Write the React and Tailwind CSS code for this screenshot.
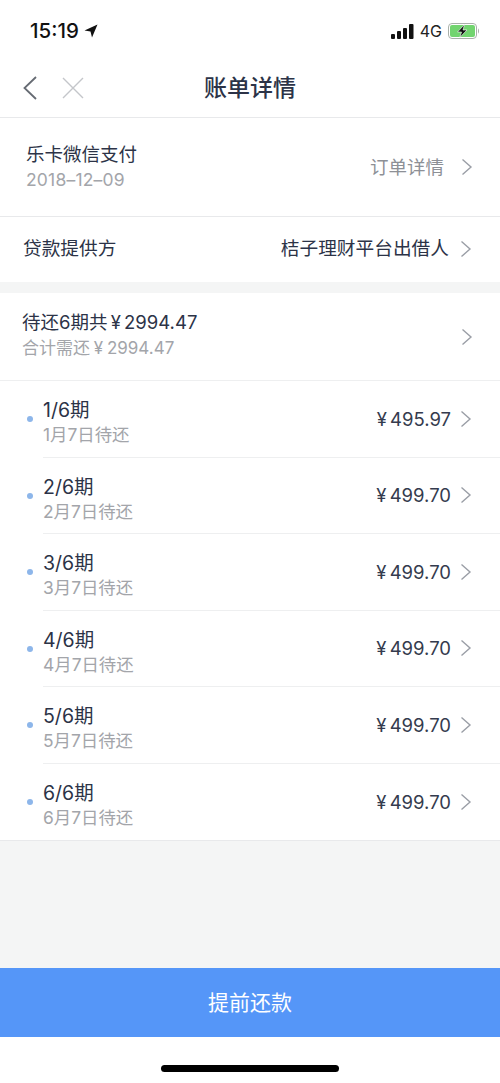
const plans = [
  { no: '1/6期', date: '1月7日待还', amount: '¥ 495.97' },
  { no: '2/6期', date: '2月7日待还', amount: '¥ 499.70' },
  { no: '3/6期', date: '3月7日待还', amount: '¥ 499.70' },
  { no: '4/6期', date: '4月7日待还', amount: '¥ 499.70' },
  { no: '5/6期', date: '5月7日待还', amount: '¥ 499.70' },
  { no: '6/6期', date: '6月7日待还', amount: '¥ 499.70' },
]

function Chevron({ className = '' }) {
  return (
    <svg width="12" height="18" viewBox="0 0 12 18" fill="none" className={className} aria-hidden="true">
      <path d="M1.5 1.5L10 9L1.5 16.5" stroke="#9a9ea6" strokeWidth="1.4" />
    </svg>
  )
}

function StatusBar() {
  return (
    <div className="flex h-[60px] items-start justify-between pl-[30px] pr-[20px] pt-[19px]">
      <div className="flex items-center gap-[5px]">
        <span className="text-[20.5px] leading-[24px] font-medium text-[#111]">15:19</span>
        <svg width="14" height="14" viewBox="0 0 14 14" aria-hidden="true">
          <path d="M13.5 0.5L0.5 6.5L6.5 7.5L8 13.5Z" fill="#111" />
        </svg>
      </div>
      <div className="flex items-center gap-[6px] pt-[3px]">
        <svg width="23" height="15" viewBox="0 0 23 15" aria-hidden="true">
          <rect x="0" y="10" width="4" height="5" rx="1" fill="#111" />
          <rect x="6" y="7" width="4" height="8" rx="1" fill="#111" />
          <rect x="12" y="4" width="4" height="11" rx="1" fill="#111" />
          <rect x="18" y="0" width="4.5" height="15" rx="1" fill="#111" />
        </svg>
        <span className="text-[16px] leading-[18px] text-[#222]">4G</span>
        <svg width="32" height="16" viewBox="0 0 32 16" aria-hidden="true">
          <rect x="0.5" y="0.5" width="28" height="15" rx="3.5" fill="none" stroke="#a9b0a9" />
          <rect x="2" y="2" width="25" height="12" rx="2" fill="#72d46f" />
          <path d="M30 5.5c1.3.4 1.3 4.6 0 5z" fill="#a9b0a9" />
          <path d="M16.5 1.5L9.5 9H13.5L11.8 14.5L19 7H15Z" fill="#111" stroke="#fff" strokeWidth="0.6" />
        </svg>
      </div>
    </div>
  )
}

function NavBar() {
  return (
    <div className="relative flex h-[58px] items-center border-b border-[#e8e9eb] pb-[1px] pl-[23px]">
      <svg width="14" height="24" viewBox="0 0 14 24" fill="none" aria-hidden="true">
        <path d="M13 1L1.5 12L13 23" stroke="#666b73" strokeWidth="1.8" />
      </svg>
      <svg width="22" height="22" viewBox="0 0 22 22" fill="none" className="ml-[25px]" aria-hidden="true">
        <path d="M1 1L21 21M21 1L1 21" stroke="#c4c6ca" strokeWidth="1.4" />
      </svg>
      <div className="absolute inset-x-0 text-center text-[23px] leading-[30px] font-medium text-[#2c3347]">账单详情</div>
    </div>
  )
}

function PlanRow({ plan, last }) {
  return (
    <div className="flex h-[76.5px] items-center pl-[27px]">
      <span className="mr-[10px] h-[6px] w-[6px] shrink-0 rounded-full bg-[#8db6ea]" />
      <div className={`flex h-full flex-1 justify-between pr-[22px] ${last ? '' : 'border-b border-[#eeeff0]'}`}>
        <div className="pt-[17px]">
          <div className="text-[19.5px] leading-[24px] text-[#2c3347]">{plan.no}</div>
          <div className="mt-[2px] text-[17.4px] leading-[22px] text-[#a3a5aa]">{plan.date}</div>
        </div>
        <div className="flex items-center gap-[9px] pr-[6px]">
          <span className="text-[18.5px] leading-[24px] text-[#343b4e] [word-spacing:-2px]">{plan.amount}</span>
          <Chevron />
        </div>
      </div>
    </div>
  )
}

export default function App() {
  return (
    <div className="flex h-[1083px] w-[500px] flex-col overflow-hidden bg-[#f4f5f5] font-['Inter','Noto_Sans_CJK_SC',sans-serif]">
      <div className="bg-white">
        <StatusBar />
        <NavBar />
      </div>

      <div className="flex h-[99px] items-center justify-between border-b border-[#e8e9eb] bg-white pl-[26px] pr-[27px]">
        <div className="-mt-[3px]">
          <div className="text-[18.5px] leading-[26px] text-[#2c3347]">乐卡微信支付</div>
          <div className="mt-[2px] text-[17.5px] leading-[22px] tracking-[0.2px] text-[#a3a5aa]">2018–12–09</div>
        </div>
        <div className="flex items-center gap-[17px]">
          <span className="text-[18.5px] leading-[26px] text-[#8d9096]">订单详情</span>
          <Chevron />
        </div>
      </div>

      <div className="flex h-[65px] items-center justify-between bg-white pb-[2px] pl-[23px] pr-[28px]">
        <span className="text-[18.7px] leading-[26px] text-[#2c3347]">贷款提供方</span>
        <div className="flex items-center gap-[11px]">
          <span className="text-[18.7px] leading-[26px] text-[#2c3347]">桔子理财平台出借人</span>
          <Chevron />
        </div>
      </div>

      <div className="mt-[11px] flex h-[88px] items-center justify-between border-b border-[#eeeff0] bg-white pl-[22px] pr-[27px]">
        <div className="-mt-[5px]">
          <div className="text-[18.5px] leading-[26px] text-[#2c3347] [word-spacing:-2px]">待还6期共 ¥ 2994.47</div>
          <div className="mt-[2px] text-[17px] leading-[22px] text-[#a3a5aa] [word-spacing:-1px]">合计需还 ¥ 2994.47</div>
        </div>
        <Chevron />
      </div>

      <div className="border-b border-[#e8e9eb] bg-white">
        {plans.map((plan, i) => (
          <PlanRow key={plan.no} plan={plan} last={i === plans.length - 1} />
        ))}
      </div>

      <div className="flex-1" />

      <div className="flex h-[69px] items-center justify-center bg-[#5596f8] text-[21px] text-white">提前还款</div>
      <div className="flex h-[46px] items-start justify-center bg-white pt-[28px]">
        <div className="h-[7px] w-[178px] rounded-full bg-black" />
      </div>
    </div>
  )
}
